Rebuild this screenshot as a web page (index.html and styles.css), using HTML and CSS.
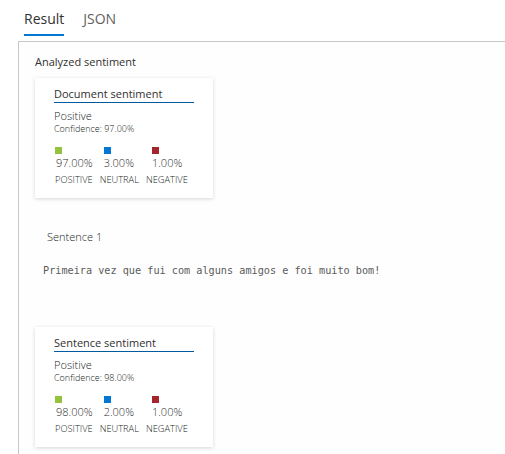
FILE: index.html
```html
<!DOCTYPE html>
<html>
<head>
<meta charset="utf-8">
<link rel="stylesheet" href="styles.css">
</head>
<body>
<div class="tabs">
  <div class="tab active">Result</div>
  <div class="tab">JSON</div>
</div>
<div class="panel">
  <div class="heading">Analyzed sentiment</div>
  <div class="card">
    <div class="card-title">Document sentiment</div>
    <div class="label">Positive</div>
    <div class="conf">Confidence: 97.00%</div>
    <div class="scores">
      <div class="score s1"><span class="sq pos"></span><span class="pct">97.00%</span><span class="cat">POSITIVE</span></div>
      <div class="score s2"><span class="sq neu"></span><span class="pct">3.00%</span><span class="cat">NEUTRAL</span></div>
      <div class="score s3"><span class="sq neg"></span><span class="pct">1.00%</span><span class="cat">NEGATIVE</span></div>
    </div>
  </div>
  <div class="sentence-title">Sentence 1</div>
  <div class="sentence-text">Primeira vez que fui com alguns amigos e foi muito bom!</div>
  <div class="card card2">
    <div class="card-title">Sentence sentiment</div>
    <div class="label">Positive</div>
    <div class="conf">Confidence: 98.00%</div>
    <div class="scores">
      <div class="score s1"><span class="sq pos"></span><span class="pct">98.00%</span><span class="cat">POSITIVE</span></div>
      <div class="score s2"><span class="sq neu"></span><span class="pct">2.00%</span><span class="cat">NEUTRAL</span></div>
      <div class="score s3"><span class="sq neg"></span><span class="pct">1.00%</span><span class="cat">NEGATIVE</span></div>
    </div>
  </div>
</div>
</body>
</html>
```
FILE: styles.css
```css
* { box-sizing: border-box; }
html, body { margin: 0; padding: 0; background: #fff; }
body {
  font-family: "Segoe UI", "Open Sans", "Noto Sans", sans-serif;
  color: #323130;
  overflow: hidden;
}
.tabs {
  display: flex;
  gap: 19px;
  padding-left: 24px;
  height: 41px;
}
.tab {
  font-size: 14px;
  line-height: 19px;
  padding-top: 9px;
  height: 36px;
  color: #605e5c;
}
.tab.active {
  color: #323130;
  border-bottom: 2px solid #0078d4;
}
.panel {
  margin-left: 18px;
  border-top: 1px solid #c8c8c8;
  border-left: 1px solid #c8c8c8;
  background: #fefefe;
  padding: 12px 0 20px 16px;
  height: 420px;
}
.heading {
  font-size: 11px;
  line-height: 15px;
  color: #323130;
}
.card {
  margin-top: 9px;
  width: 178px;
  height: 120px;
  background: #fff;
  box-shadow: 0 1px 4px rgba(0,0,0,0.16);
  padding: 9px 19px 0 19px;
}
.card-title {
  font-size: 11px;
  line-height: 14px;
  width: 140px;
  border-bottom: 1px solid #005a9e;
  padding-bottom: 1px;
  color: #323130;
}
.label {
  margin-top: 6px;
  font-size: 11px;
  line-height: 14px;
  font-weight: 300;
  color: #201f1e;
}
.conf {
  font-size: 9px;
  line-height: 12px;
  font-weight: 300;
  color: #201f1e;
}
.scores {
  display: flex;
  gap: 7px;
  margin-top: 12px;
  margin-left: 1px;
}
.score {
  display: flex;
  flex-direction: column;
  align-items: flex-start;
}
.sq {
  width: 7px;
  height: 7px;
}
.s2 .sq, .s2 .pct { margin-left: 4px; }
.s3 .sq, .s3 .pct { margin-left: 6px; }
.s1 .pct { margin-left: 1px; }
.pos { background: #92c23e; }
.neu { background: #0078d4; }
.neg { background: #a4262c; }
.pct {
  margin-top: 2px;
  font-size: 11px;
  line-height: 14px;
  font-weight: 300;
  color: #323130;
}
.cat {
  margin-top: 4px;
  font-size: 9.3px;
  line-height: 11px;
  font-weight: 300;
  color: #201f1e;
}
.sentence-title {
  margin-top: 31px;
  margin-left: 12px;
  font-size: 11px;
  line-height: 15px;
  font-weight: 300;
  color: #201f1e;
}
.sentence-text {
  margin-top: 20px;
  margin-left: 8px;
  font-family: "DejaVu Sans Mono", "Liberation Mono", monospace;
  font-size: 10.2px;
  line-height: 14px;
  color: #5a5a5a;
}
.card2 {
  margin-top: 49px;
}
```
